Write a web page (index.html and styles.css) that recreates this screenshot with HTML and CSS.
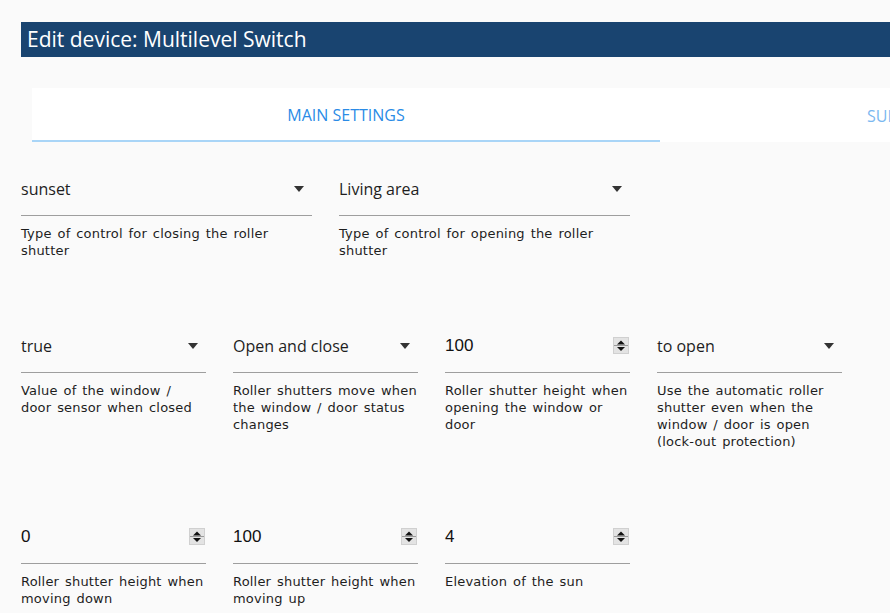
FILE: index.html
```html
<!DOCTYPE html>
<html>
<head>
<meta charset="utf-8">
<link rel="stylesheet" href="styles.css">
</head>
<body>
<div class="page">
  <div class="titlebar">Edit device: Multilevel Switch</div>
  <div class="tabs">
    <div class="tab active">MAIN SETTINGS</div>
    <div class="tab">SUNSET / SUNRISE SETTINGS</div>
  </div>

  <div class="row">
    <div class="field wide">
      <div class="input select"><span class="val">sunset</span><span class="caret"></span></div>
      <div class="help">Type of control for closing the roller shutter</div>
    </div>
    <div class="field wide">
      <div class="input select"><span class="val">Living area</span><span class="caret"></span></div>
      <div class="help">Type of control for opening the roller shutter</div>
    </div>
  </div>

  <div class="row">
    <div class="field">
      <div class="input select"><span class="val">true</span><span class="caret"></span></div>
      <div class="help">Value of the window / door sensor when closed</div>
    </div>
    <div class="field">
      <div class="input select"><span class="val">Open and close</span><span class="caret"></span></div>
      <div class="help">Roller shutters move when the window / door status changes</div>
    </div>
    <div class="field">
      <div class="input number"><span class="num">100</span><span class="spin"><svg width="16" height="17" viewBox="0 0 16 17"><rect x="0.5" y="0.5" width="15" height="16" fill="#e3e3e3" stroke="#d0d0d0"/><path d="M4 7.5 L8 3.5 L12 7.5 Z" fill="#111"/><line x1="1" y1="8.5" x2="15" y2="8.5" stroke="#9a9a9a"/><path d="M4 10 L12 10 L8 14 Z" fill="#111"/></svg></span></div>
      <div class="help">Roller shutter height when opening the window or door</div>
    </div>
    <div class="field">
      <div class="input select"><span class="val">to open</span><span class="caret"></span></div>
      <div class="help">Use the automatic roller shutter even when the window / door is open (lock-out protection)</div>
    </div>
  </div>

  <div class="row">
    <div class="field">
      <div class="input number"><span class="num">0</span><span class="spin"><svg width="16" height="17" viewBox="0 0 16 17"><rect x="0.5" y="0.5" width="15" height="16" fill="#e3e3e3" stroke="#d0d0d0"/><path d="M4 7.5 L8 3.5 L12 7.5 Z" fill="#111"/><line x1="1" y1="8.5" x2="15" y2="8.5" stroke="#9a9a9a"/><path d="M4 10 L12 10 L8 14 Z" fill="#111"/></svg></span></div>
      <div class="help">Roller shutter height when moving down</div>
    </div>
    <div class="field">
      <div class="input number"><span class="num">100</span><span class="spin"><svg width="16" height="17" viewBox="0 0 16 17"><rect x="0.5" y="0.5" width="15" height="16" fill="#e3e3e3" stroke="#d0d0d0"/><path d="M4 7.5 L8 3.5 L12 7.5 Z" fill="#111"/><line x1="1" y1="8.5" x2="15" y2="8.5" stroke="#9a9a9a"/><path d="M4 10 L12 10 L8 14 Z" fill="#111"/></svg></span></div>
      <div class="help">Roller shutter height when moving up</div>
    </div>
    <div class="field">
      <div class="input number"><span class="num">4</span><span class="spin"><svg width="16" height="17" viewBox="0 0 16 17"><rect x="0.5" y="0.5" width="15" height="16" fill="#e3e3e3" stroke="#d0d0d0"/><path d="M4 7.5 L8 3.5 L12 7.5 Z" fill="#111"/><line x1="1" y1="8.5" x2="15" y2="8.5" stroke="#9a9a9a"/><path d="M4 10 L12 10 L8 14 Z" fill="#111"/></svg></span></div>
      <div class="help">Elevation of the sun</div>
    </div>
  </div>
</div>
</body>
</html>
```

FILE: styles.css
```css
html, body {
  margin: 0;
  padding: 0;
  background: #fafafa;
  overflow: hidden;
  width: 890px;
  height: 613px;
}

.page {
  padding: 22px 0 0 21px;
  width: 1400px;
  font-family: "Open Sans", sans-serif;
}

.titlebar {
  height: 35px;
  background: #194470;
  color: #ffffff;
  font-size: 21px;
  line-height: 35px;
  padding-left: 6px;
  box-sizing: border-box;
}

.tabs {
  display: flex;
  margin: 31px 0 0 11px;
  background: #ffffff;
}

.tab {
  width: 628px;
  height: 54px;
  display: flex;
  align-items: center;
  justify-content: center;
  font-size: 16px;
  color: #7bb8f0;
  box-sizing: border-box;
  padding-top: 1px;
  white-space: nowrap;
}

.tab.active {
  color: #2a8be6;
  border-bottom: 2px solid #a9d5f7;
}

.row {
  display: flex;
  gap: 27px;
  margin-top: 29px;
}

.row + .row {
  margin-top: 69px;
}

.field {
  width: 185px;
}

.field.wide {
  width: 291px;
}

.input {
  display: flex;
  align-items: center;
  justify-content: space-between;
  height: 45px;
  padding: 8px 0 16px 0;
  box-sizing: border-box;
  border-bottom: 1px solid #9e9e9e;
}

.val {
  font-family: "Open Sans", sans-serif;
  font-size: 16px;
  line-height: 20px;
  color: #1e1e1e;
}

.num {
  font-family: "Liberation Sans", Arial, sans-serif;
  font-size: 17px;
  line-height: 20px;
  color: #111111;
}

.caret {
  width: 0;
  height: 0;
  border-left: 5.5px solid transparent;
  border-right: 5.5px solid transparent;
  border-top: 6px solid #333333;
  margin-right: 8px;
}

.spin {
  display: flex;
  margin-right: 1px;
  margin-top: -1px;
}

.help {
  margin-top: 9px;
  font-family: "DejaVu Sans", sans-serif;
  font-size: 13px;
  letter-spacing: 0.2px;
  word-spacing: 1.5px;
  line-height: 17px;
  color: #1e1e1e;
}
```
